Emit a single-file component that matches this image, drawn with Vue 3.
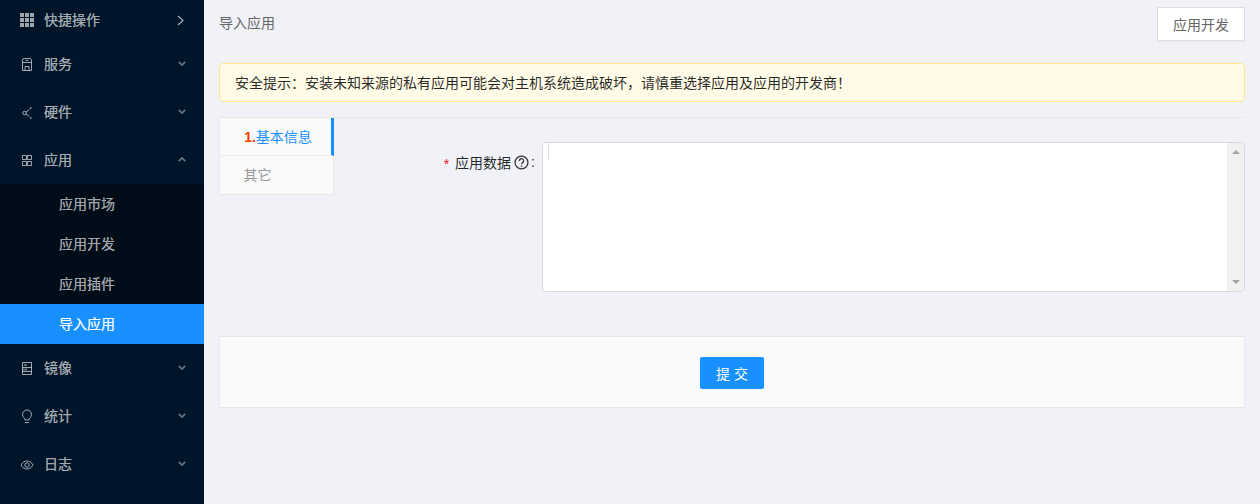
<script setup>
const before = [
  { label: '快捷操作', icon: 'grid', arrow: 'right', cls: 'first' },
  { label: '服务', icon: 'save', arrow: 'down' },
  { label: '硬件', icon: 'share', arrow: 'down' },
  { label: '应用', icon: 'apps', arrow: 'up' },
]
const subs = [
  { label: '应用市场' },
  { label: '应用开发' },
  { label: '应用插件' },
  { label: '导入应用', active: true },
]
const after = [
  { label: '镜像', icon: 'book', arrow: 'down' },
  { label: '统计', icon: 'bulb', arrow: 'down' },
  { label: '日志', icon: 'eye', arrow: 'down' },
]
const groups = [before, 'subs', after]
const arrows = { down: 'M1 1l4 4 4-4', up: 'M1 5l4-4 4 4' }
</script>

<template>
  <div class="page">
    <aside class="side">
      <template v-for="(group, gi) in groups" :key="gi">
        <div v-if="group === 'subs'" class="subs">
          <div v-for="s in subs" :key="s.label" class="sub" :class="{ active: s.active }">{{ s.label }}</div>
        </div>
        <template v-else>
          <div v-for="m in group" :key="m.label" class="item" :class="m.cls">
            <svg class="ico" viewBox="0 0 14 14" fill="none" stroke="currentColor" stroke-width="1">
              <g v-if="m.icon === 'grid'" fill="currentColor" stroke="none">
                <rect x="0" y="0" width="4" height="4" /><rect x="5" y="0" width="4" height="4" /><rect x="10" y="0" width="4" height="4" />
                <rect x="0" y="5" width="4" height="4" /><rect x="5" y="5" width="4" height="4" /><rect x="10" y="5" width="4" height="4" />
                <rect x="0" y="10" width="4" height="4" /><rect x="5" y="10" width="4" height="4" /><rect x="10" y="10" width="4" height="4" />
              </g>
              <path v-else-if="m.icon === 'save'" d="M3.500 1.500h7l1 1.500v10.500h-9V3z M2.500 5.500h9 M5 13.500V9.500h4v4 M5.500 3.500h3" />
              <g v-else-if="m.icon === 'share'">
                <circle cx="4.500" cy="8" r="1.700" />
                <path d="M6 7l3.500-2.500 M6 9l3.500 2.500" />
                <path d="M10 3h1.500 M10 13h1.500" stroke-width="1.500" />
              </g>
              <path v-else-if="m.icon === 'apps'" d="M2.500 2.500h4v4h-4z M7.500 2.500h4v4h-4z M2.500 8.500h4v4h-4z M7.500 8.500h4v4h-4z" />
              <g v-else-if="m.icon === 'book'">
                <path d="M2.500 1.500h9v12h-9z M2.500 6.500h9 M2.500 10.500h9" />
                <path d="M4 4h3 M3 8.500h4.500" stroke-width="2" opacity=".6" />
              </g>
              <path v-else-if="m.icon === 'bulb'" d="M5 11c0-2.200-2.500-2.600-2.500-5.500a4.500 4.500 0 0 1 9 0c0 2.900-2.500 3.300-2.500 5.500z M5 13.500h4" />
              <g v-else-if="m.icon === 'eye'">
                <path d="M1 8c1.500-2.700 3.500-4 6-4s4.500 1.300 6 4c-1.500 2.700-3.500 4-6 4s-4.500-1.300-6-4z" />
                <circle cx="7" cy="8" r="2.200" />
              </g>
            </svg>
            <span class="label">{{ m.label }}</span>
            <svg v-if="m.arrow === 'right'" class="arr-right" viewBox="0 0 7 11" fill="none" stroke="currentColor" stroke-width="1.200">
              <path d="M1 1l5 4.500-5 4.500" />
            </svg>
            <svg v-else class="arr" viewBox="0 0 10 6" fill="none" stroke="currentColor" stroke-width="2">
              <path :d="arrows[m.arrow]" />
            </svg>
          </div>
        </template>
      </template>
    </aside>

    <main class="main">
      <header class="head">
        <span class="crumb">导入应用</span>
        <button class="dev">应用开发</button>
      </header>

      <div class="alert">安全提示：安装未知来源的私有应用可能会对主机系统造成破坏，请慎重选择应用及应用的开发商！</div>

      <section class="body">
        <nav class="tabs">
          <div class="tab on"><span class="num">1.</span>基本信息</div>
          <div class="tab off">其它</div>
        </nav>
        <div class="form">
          <label class="lbl">
            <span class="star">*</span>
            <span>应用数据</span>
            <svg class="help" viewBox="0 0 14 14" fill="none" stroke="#333" stroke-width="1.200">
              <circle cx="7" cy="7" r="6" />
              <path d="M5 5.500a2 2 0 1 1 3 1.700c-.7.400-1 .8-1 1.500" />
              <path d="M7 9.800v1.300" />
            </svg>
            <span class="colon">:</span>
          </label>
          <div class="area">
            <div class="caret"></div>
            <div class="bar">
              <i class="up"></i>
              <i class="dn"></i>
            </div>
          </div>
        </div>
      </section>

      <footer class="foot">
        <button class="submit">提 交</button>
      </footer>
    </main>
  </div>
</template>

<style>
html, body { margin: 0; background: #f0f2f5; }
</style>

<style scoped>
.page {
  display: flex;
  width: 1260px;
  height: 504px;
  overflow: hidden;
  background: #f0f2f7;
  font-family: "Liberation Sans", "Noto Sans CJK SC", sans-serif;
  font-size: 14px;
}
.side {
  width: 204px;
  flex: none;
  background: #001529;
  display: flex;
  flex-direction: column;
}
.item {
  height: 48px;
  flex: none;
  display: flex;
  align-items: center;
  padding: 0 18px 0 20px;
  color: rgba(255, 255, 255, 0.65);
}
.item.first { height: 40px; }
.ico { width: 14px; height: 14px; margin-right: 10px; flex: none; color: rgba(255, 255, 255, 0.62); }
.label { flex: 1; padding-bottom: 2px; -webkit-text-stroke: 0.2px currentColor; }
.arr { width: 8px; height: 5px; color: rgba(255, 255, 255, 0.42); margin-top: -2px; }
.arr-right { width: 7px; height: 11px; color: rgba(255, 255, 255, 0.65); margin-right: 2px; }
.subs { background: #000c17; flex: none; }
.sub {
  height: 40px;
  line-height: 40px;
  padding-left: 59px;
  color: rgba(255, 255, 255, 0.65);
  -webkit-text-stroke: 0.2px currentColor;
}
.sub.active { background: #1890ff; color: #fff; }
.main {
  flex: 1;
  min-width: 0;
  padding: 7px 15px 0;
  display: flex;
  flex-direction: column;
}
.head {
  height: 34px;
  display: flex;
  justify-content: space-between;
  align-items: flex-start;
}
.crumb { color: #666; line-height: 32px; }
.dev {
  width: 88px;
  height: 34px;
  background: #fff;
  border: 1px solid #ddd;
  box-shadow: 0 2px 0 rgba(0, 0, 0, 0.02);
  color: #666;
  font: inherit;
  padding: 0;
}
.alert {
  margin-top: 22px;
  height: 39px;
  box-sizing: border-box;
  line-height: 38px;
  padding: 0 15px;
  background: #fffbe6;
  border: 1px solid #ffe58f;
  border-radius: 4px;
  color: rgba(0, 0, 0, 0.85);
}
.body {
  margin-top: 15px;
  height: 204px;
  border-top: 1px solid #e8e8e8;
  display: flex;
  box-sizing: border-box;
}
.tabs {
  width: 115px;
  height: 77px;
  box-sizing: border-box;
  background: #fafafa;
  border: 1px solid #e8e8e8;
  border-top: 0;
  flex: none;
}
.tab {
  height: 38px;
  line-height: 38px;
  text-align: center;
  box-sizing: border-box;
}
.tab.on {
  color: #1890ff;
  border-right: 3px solid #1890ff;
  border-bottom: 1px solid #eee;
  margin-right: -1px;
  padding-left: 5px;
}
.num { color: #f53c00; font-weight: bold; }
.tab.off { color: #999; padding-right: 38px; }
.form { flex: 1; display: flex; padding-top: 24px; min-width: 0; }
.lbl {
  width: 208px;
  height: 40px;
  flex: none;
  display: flex;
  align-items: center;
  justify-content: flex-end;
  color: rgba(0, 0, 0, 0.85);
  padding-right: 7px;
  box-sizing: border-box;
}
.star { color: #e8141e; margin: 4px 6px 0 0; font-size: 14px; }
.help { width: 15px; height: 15px; margin: 0 2px 0 3px; }
.colon { color: #333; }
.area {
  flex: 1;
  height: 150px;
  background: #fff;
  border: 1px solid #d9d9d9;
  border-radius: 4px;
  box-sizing: border-box;
  display: flex;
  justify-content: space-between;
  overflow: hidden;
}
.caret { width: 1px; height: 17px; margin-left: 5px; background: #ddd; }
.bar {
  width: 17px;
  background: #f1f1f1;
  display: flex;
  flex-direction: column;
  justify-content: space-between;
  align-items: center;
  padding: 7px 0;
  box-sizing: border-box;
}
.up { width: 0; height: 0; border: 4px solid transparent; border-top: 0; border-bottom: 4px solid #a3a3a3; }
.dn { width: 0; height: 0; border: 4px solid transparent; border-bottom: 0; border-top: 4px solid #a3a3a3; }
.foot {
  margin-top: 15px;
  height: 72px;
  box-sizing: border-box;
  background: #fafafa;
  border: 1px solid #e8e8e8;
  display: flex;
  align-items: center;
  justify-content: center;
  padding-top: 2px;
}
.submit {
  width: 64px;
  height: 32px;
  background: #1890ff;
  border: 0;
  border-radius: 2px;
  color: #fff;
  font: inherit;
  padding: 0;
}
</style>
